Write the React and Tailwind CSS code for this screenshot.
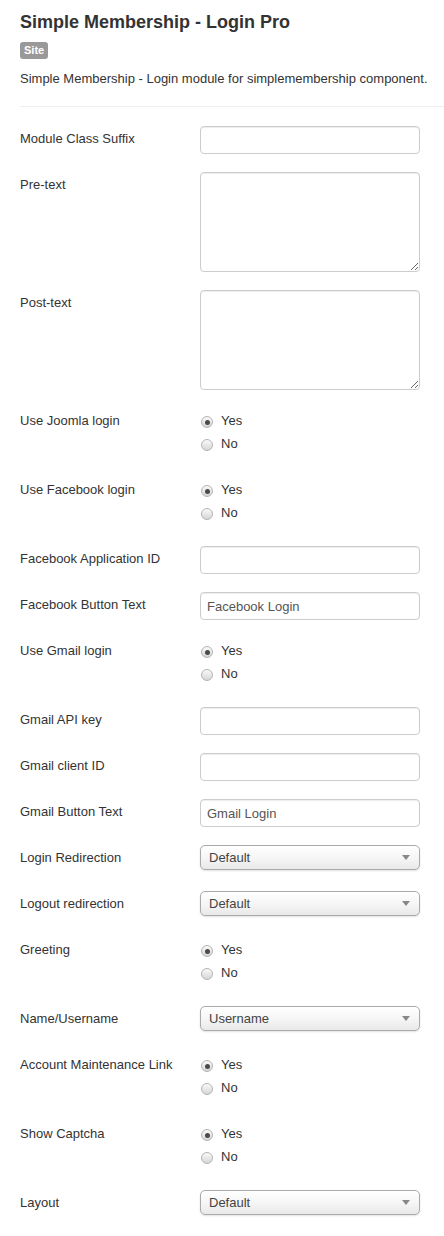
import React from 'react';

const font = { fontFamily: '"Liberation Sans", Arial, sans-serif' };

function Label({ children }) {
  return <div className="w-[180px] shrink-0 pt-[4px] leading-[18px] text-[13px] text-[#333]">{children}</div>;
}

function TextInput({ value = '' }) {
  return (
    <input
      type="text"
      defaultValue={value}
      className="w-[220px] h-[28px] px-[6px] rounded-[4px] border border-[#ccc] bg-white text-[13px] text-[#555] shadow-[inset_0_1px_1px_rgba(0,0,0,0.075)] outline-none"
      style={font}
    />
  );
}

function TextArea() {
  return (
    <textarea
      className="block w-[220px] h-[100px] px-[6px] py-[4px] rounded-[4px] border border-[#ccc] bg-white text-[13px] text-[#555] shadow-[inset_0_1px_1px_rgba(0,0,0,0.075)] outline-none"
      style={font}
    />
  );
}

function Radio({ checked }) {
  return (
    <span className="relative flex items-center justify-center w-[12px] h-[12px] mt-[3px] rounded-full border border-[#b4b4b4] bg-linear-to-b from-[#fafafa] to-[#d6d6d6]">
      {checked && <span className="w-[5px] h-[5px] rounded-full bg-[#4a4a4a]" />}
    </span>
  );
}

function RadioGroup({ value = 'yes' }) {
  return (
    <div className="pt-[1px] pb-[4px]">
      {['Yes', 'No'].map((opt) => (
        <div key={opt} className="flex items-center h-[23px] pl-[1px]">
          <Radio checked={opt.toLowerCase() === value} />
          <span className="ml-[8px] text-[13px] text-[#333] leading-[23px]">{opt}</span>
        </div>
      ))}
    </div>
  );
}

function Select({ value }) {
  return (
    <div className="flex items-center justify-between w-[220px] h-[25px] pl-[8px] pr-[9px] rounded-[5px] border border-[#aaa] bg-linear-to-b from-white via-[#f6f6f6] to-[#e9e9e9] shadow-[0_1px_2px_rgba(0,0,0,0.12)]">
      <span className="text-[13px] text-[#444] leading-[18px]">{value}</span>
      <span className="w-0 h-0 border-x-[4px] border-x-transparent border-t-[5px] border-t-[#888]" />
    </div>
  );
}

function Row({ label, children }) {
  return (
    <div className="flex mb-[18px]">
      <Label>{label}</Label>
      <div>{children}</div>
    </div>
  );
}

export default function App() {
  return (
    <div className="w-[444px] min-h-[1236px] bg-white pl-[20px] pt-[10px]" style={font}>
      <h2 className="text-[18px] leading-[24px] font-bold text-[#333]">Simple Membership - Login Pro</h2>
      <span className="inline-block mt-[8px] px-[4px] h-[17px] leading-[17px] rounded-[3px] bg-[#999] text-white text-[11px] font-bold">Site</span>
      <p className="mt-[9px] text-[13px] leading-[18px] text-[#333]">
        Simple Membership - Login module for simplemembership component.
      </p>
      <hr className="mt-[18px] mb-[19px] border-0 border-t border-[#eee]" />

      <Row label="Module Class Suffix"><TextInput /></Row>
      <Row label="Pre-text"><TextArea /></Row>
      <Row label="Post-text"><TextArea /></Row>
      <Row label="Use Joomla login"><RadioGroup /></Row>
      <Row label="Use Facebook login"><RadioGroup /></Row>
      <Row label="Facebook Application ID"><TextInput /></Row>
      <Row label="Facebook Button Text"><TextInput value="Facebook Login" /></Row>
      <Row label="Use Gmail login"><RadioGroup /></Row>
      <Row label="Gmail API key"><TextInput /></Row>
      <Row label="Gmail client ID"><TextInput /></Row>
      <Row label="Gmail Button Text"><TextInput value="Gmail Login" /></Row>
      <Row label="Login Redirection"><div className="h-[28px]"><Select value="Default" /></div></Row>
      <Row label="Logout redirection"><div className="h-[28px]"><Select value="Default" /></div></Row>
      <Row label="Greeting"><RadioGroup /></Row>
      <Row label="Name/Username"><div className="h-[28px]"><Select value="Username" /></div></Row>
      <Row label="Account Maintenance Link"><RadioGroup /></Row>
      <Row label="Show Captcha"><RadioGroup /></Row>
      <Row label="Layout"><div className="h-[28px]"><Select value="Default" /></div></Row>
    </div>
  );
}
